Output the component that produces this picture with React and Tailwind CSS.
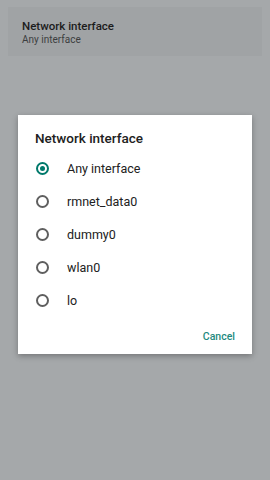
export default function App() {
  const options = ["Any interface", "rmnet_data0", "dummy0", "wlan0", "lo"];
  const selected = 0;

  return (
    <div className="relative h-[480px] w-[270px] overflow-hidden bg-[#a5a8aa] font-['Roboto',sans-serif]">
      {/* underlying preference row */}
      <div className="mx-[8px] mt-[7px] h-[49px] bg-[#a0a3a5] px-[14px] pt-[12px]">
        <p className="text-[11.5px] font-medium leading-[14px] text-[#1c1c1c]">Network interface</p>
        <p className="text-[10px] leading-[14px] text-[#3c3e3f]">Any interface</p>
      </div>

      {/* dialog */}
      <div className="absolute left-[18px] top-[115px] w-[234px] bg-white shadow-[0_2px_6px_rgba(0,0,0,0.3)]">
        <h2 className="px-[17px] pt-[15px] text-[13.5px] font-medium leading-[16px] text-[#212121]">
          Network interface
        </h2>
        <div className="mt-[6px]">
          {options.map((opt, i) => (
            <div key={opt} className="flex h-[33px] items-center pl-[18px]">
              <span
                className={
                  i === selected
                    ? "flex h-[13px] w-[13px] items-center justify-center rounded-full border-2 border-[#00796b]"
                    : "flex h-[13px] w-[13px] items-center justify-center rounded-full border-2 border-[#5f5f5f]"
                }
              >
                {i === selected && <span className="h-[5px] w-[5px] rounded-full bg-[#00796b]" />}
              </span>
              <span className="ml-[18px] text-[12.5px] leading-[14px] text-[#212121]">{opt}</span>
            </div>
          ))}
        </div>
        <div className="flex justify-end px-[17px] pb-[11px] pt-[14px]">
          <span className="text-[10.5px] font-medium leading-[12px] text-[#1e8a80]">Cancel</span>
        </div>
      </div>
    </div>
  );
}
